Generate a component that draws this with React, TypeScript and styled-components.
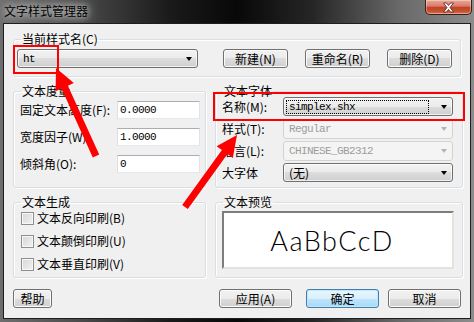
import React from "react";
import styled, { createGlobalStyle } from "styled-components";

const GlobalStyle = createGlobalStyle`
  html, body {
    margin: 0;
    padding: 0;
    background: #ffffff;
  }
  body {
    font-family: "Noto Sans CJK SC", "Liberation Sans", sans-serif;
    font-size: 12px;
    color: #000;
  }
  * {
    box-sizing: border-box;
  }
`;

const MONO = `"Liberation Mono", "Noto Sans CJK SC", monospace`;

const Window = styled.div`
  position: relative;
  width: 474px;
  height: 322px;
  display: flex;
  flex-direction: column;
  padding: 0 3px 3px 3px;
  overflow: hidden;
  background: linear-gradient(
    90deg,
    #6e6e6e 0%,
    #4c4c4c 16%,
    #1a1a1a 36%,
    #080808 50%,
    #262626 66%,
    #686868 84%,
    #8c8c8c 100%
  );
`;

const TitleBar = styled.div`
  height: 23px;
  display: flex;
  align-items: flex-start;
`;

const TitleText = styled.span`
  margin: 3px 0 0 1px;
  line-height: 16px;
  font-size: 12px;
  color: #000;
  text-shadow: 0 0 6px rgba(255, 255, 255, 0.85), 0 0 12px rgba(255, 255, 255, 0.6),
    0 0 18px rgba(255, 255, 255, 0.4);
`;

const CloseButton = styled.div`
  margin-left: auto;
  margin-right: -1px;
  width: 47px;
  height: 15px;
  display: flex;
  align-items: center;
  justify-content: center;
  border: 1px solid #3a1d18;
  border-top: none;
  border-radius: 0 0 5px 5px;
  background: linear-gradient(#e9a898 0%, #d97a66 45%, #c0412a 50%, #c5502f 80%, #d7775a 100%);
  box-shadow: inset 0 0 0 1px rgba(255, 255, 255, 0.35);
`;

const Client = styled.div`
  flex: 1;
  display: flex;
  flex-direction: column;
  background: #f0f0f0;
  border: 1px solid #1e1e1e;
  padding: 9px 9px 0 9px;
`;

const Group = styled.fieldset<{ $h?: number }>`
  margin: 0;
  min-width: 0;
  height: ${(p) => (p.$h ? `${p.$h}px` : "auto")};
  border: 1px solid #d5dfe5;
  border-radius: 3px;
  padding: 0;
  box-shadow: inset 1px 1px 0 #ffffff, 1px 1px 0 #ffffff;
`;

const Legend = styled.legend`
  margin-left: 7px;
  padding: 0 1px;
  font-size: 12px;
  line-height: 12px;
`;

const StyleRow = styled.div`
  display: flex;
  align-items: center;
  padding: 4px 8px 8px 3px;
`;

const ButtonGroup = styled.div`
  margin-left: auto;
  display: flex;
  gap: 17px;
`;

const Columns = styled.div`
  display: grid;
  width: 450px;
  grid-template-columns: 193px 248px;
  column-gap: 9px;
  margin-top: 8px;
`;

const FieldList = styled.div<{ $gap: number; $pad: string }>`
  display: flex;
  flex-direction: column;
  gap: ${(p) => p.$gap}px;
  padding: ${(p) => p.$pad};
`;

const FieldRow = styled.div<{ $h: number }>`
  display: flex;
  align-items: center;
  height: ${(p) => p.$h}px;
`;

const FieldLabel = styled.span<{ $w?: number }>`
  flex: 0 0 ${(p) => (p.$w ? `${p.$w}px` : "auto")};
  white-space: nowrap;
  line-height: 14px;
`;

const TextInput = styled.div`
  margin-left: auto;
  width: 83px;
  height: 18px;
  background: #ffffff;
  border: 1px solid;
  border-color: #abadb3 #e2e3ea #e3e9ef #dbdfe6;
  padding: 0 0 0 2px;
  font-family: ${MONO};
  font-size: 11px;
  letter-spacing: -0.6px;
  line-height: 16px;
`;

const Combo = styled.div<{ $w?: number; $disabled?: boolean }>`
  ${(p) => (p.$w ? `width: ${p.$w}px;` : "flex: 1;")}
  height: ${(p) => (p.$disabled ? 20 : 19)}px;
  display: flex;
  align-items: center;
  border: 1px solid ${(p) => (p.$disabled ? "#d3d3d3" : "#707070")};
  border-radius: 3px;
  background: ${(p) =>
    p.$disabled
      ? "#f4f4f4"
      : "linear-gradient(#f2f2f2 0%, #ebebeb 50%, #dddddd 50%, #cfcfcf 100%)"};
  box-shadow: ${(p) => (p.$disabled ? "none" : "inset 0 0 0 1px rgba(255,255,255,0.7)")};
  padding: 0 5px 0 2px;
  color: ${(p) => (p.$disabled ? "#9c9c9c" : "#000")};
`;

const ComboValue = styled.span<{ $focus?: boolean; $cjk?: boolean }>`
  flex: 1;
  height: 14px;
  margin-right: 12px;
  padding-left: 2px;
  border: 1px dotted ${(p) => (p.$focus ? "#000" : "transparent")};
  font-family: ${(p) => (p.$cjk ? `"Noto Sans CJK SC", sans-serif` : MONO)};
  font-size: ${(p) => (p.$cjk ? 12 : 11)}px;
  letter-spacing: ${(p) => (p.$cjk ? 0 : -0.6)}px;
  line-height: 12px;
  white-space: nowrap;
`;

const Caret = styled.span<{ $disabled?: boolean }>`
  width: 0;
  height: 0;
  border-left: 3.5px solid transparent;
  border-right: 3.5px solid transparent;
  border-top: 4px solid ${(p) => (p.$disabled ? "#b4b4b4" : "#000")};
`;

const Check = styled.span`
  width: 13px;
  height: 13px;
  margin-right: 3px;
  border: 1px solid #8e8f8f;
  background: linear-gradient(135deg, #d4d6d9 0%, #f2f2f2 100%);
  box-shadow: inset 0 0 0 1px #f7f7f7;
`;

const Preview = styled.div`
  height: 58px;
  display: flex;
  align-items: center;
  justify-content: center;
  padding-right: 12px;
  background: #ffffff;
  border: 2px solid;
  border-color: #7d7d7d #e2e2e2 #e2e2e2 #7d7d7d;
  font-family: Lato, Inter, "DejaVu Sans", sans-serif;
  font-weight: 300;
  font-size: 27px;
  letter-spacing: 1.5px;
  color: #000;
`;

const BottomRow = styled.div`
  display: flex;
  margin-top: 11px;
`;

const Button = styled.button<{ $w: number; $ml?: number; $default?: boolean }>`
  width: ${(p) => p.$w}px;
  height: 19px;
  margin: 0 0 0 ${(p) => p.$ml ?? 0}px;
  padding: 0;
  border: 1px solid ${(p) => (p.$default ? "#3c7fb1" : "#707070")};
  border-radius: 3px;
  background: ${(p) =>
    p.$default
      ? "linear-gradient(#eaf6fd 0%, #d9f0fc 50%, #bee6fd 50%, #a7d9f5 100%)"
      : "linear-gradient(#f2f2f2 0%, #ebebeb 50%, #dddddd 50%, #cfcfcf 100%)"};
  box-shadow: inset 0 0 0 1px ${(p) => (p.$default ? "#c6e6f8" : "#fbfbfb")};
  font-family: "Noto Sans CJK SC", "Liberation Sans", sans-serif;
  font-size: 12px;
  line-height: 16px;
  color: #000;
`;

const Overlay = styled.svg`
  position: absolute;
  left: 0;
  top: 0;
  width: 474px;
  height: 322px;
  pointer-events: none;
`;

const arrowPoints = (tx: number, ty: number, ex: number, ey: number) => {
  const headLen = 21;
  const headHalf = 10;
  const shaftHalf = 3.5;
  const dx = ex - tx;
  const dy = ey - ty;
  const len = Math.hypot(dx, dy);
  const ux = dx / len;
  const uy = dy / len;
  const px = -uy;
  const py = ux;
  const bx = tx + ux * headLen;
  const by = ty + uy * headLen;
  const pts = [
    [tx, ty],
    [bx + px * headHalf, by + py * headHalf],
    [bx + px * shaftHalf, by + py * shaftHalf],
    [ex + px * shaftHalf, ey + py * shaftHalf],
    [ex - px * shaftHalf, ey - py * shaftHalf],
    [bx - px * shaftHalf, by - py * shaftHalf],
    [bx - px * headHalf, by - py * headHalf],
  ];
  return pts.map((p) => `${p[0].toFixed(1)},${p[1].toFixed(1)}`).join(" ");
};

const metrics = [
  { label: "固定文本高度(F):", value: "0.0000" },
  { label: "宽度因子(W):", value: "1.0000" },
  { label: "倾斜角(O):", value: "0" },
];

const fonts = [
  { label: "名称(M):", value: "simplex.shx", focus: true },
  { label: "样式(T):", value: "Regular", disabled: true },
  { label: "语言(L):", value: "CHINESE_GB2312", disabled: true },
  { label: "大字体", value: "(无)", cjk: true },
];

const effects = ["文本反向印刷(B)", "文本颠倒印刷(U)", "文本垂直印刷(V)"];

export default function App() {
  return (
    <>
      <GlobalStyle />
      <Window>
        <TitleBar>
          <TitleText>文字样式管理器</TitleText>
          <CloseButton>
            <svg width="13" height="11" viewBox="0 0 13 11">
              <path
                d="M1.5 1 L4.5 1 L6.5 3.5 L8.5 1 L11.5 1 L8 5.5 L11.5 10 L8.5 10 L6.5 7.5 L4.5 10 L1.5 10 L5 5.5 Z"
                fill="#ffffff"
                stroke="#4a2018"
                strokeWidth="0.8"
              />
            </svg>
          </CloseButton>
        </TitleBar>
        <Client>
          <Group>
            <Legend>当前样式名(C)</Legend>
            <StyleRow>
              <Combo $w={181}>
                <ComboValue>ht</ComboValue>
                <Caret />
              </Combo>
              <ButtonGroup>
                <Button $w={65}>新建(N)</Button>
                <Button $w={65}>重命名(R)</Button>
                <Button $w={65}>删除(D)</Button>
              </ButtonGroup>
            </StyleRow>
          </Group>

          <Columns>
            <Group $h={103}>
              <Legend>文本度量</Legend>
              <FieldList $gap={9} $pad="4px 5px 0 6px">
                {metrics.map((m) => (
                  <FieldRow key={m.label} $h={18}>
                    <FieldLabel>{m.label}</FieldLabel>
                    <TextInput>{m.value}</TextInput>
                  </FieldRow>
                ))}
              </FieldList>
            </Group>
            <Group $h={103}>
              <Legend>文本字体</Legend>
              <FieldList $gap={3} $pad="0 9px 0 6px">
                {fonts.map((f) => (
                  <FieldRow key={f.label} $h={19}>
                    <FieldLabel $w={61}>{f.label}</FieldLabel>
                    <Combo $disabled={f.disabled}>
                      <ComboValue $focus={f.focus} $cjk={f.cjk}>
                        {f.value}
                      </ComboValue>
                      <Caret $disabled={f.disabled} />
                    </Combo>
                  </FieldRow>
                ))}
              </FieldList>
            </Group>
          </Columns>

          <Columns>
            <Group $h={82}>
              <Legend>文本生成</Legend>
              <FieldList $gap={7} $pad="2px 6px 0 7px">
                {effects.map((e) => (
                  <FieldRow key={e} $h={16}>
                    <Check />
                    <FieldLabel>{e}</FieldLabel>
                  </FieldRow>
                ))}
              </FieldList>
            </Group>
            <Group $h={82}>
              <Legend>文本预览</Legend>
              <FieldList $gap={0} $pad="3px 8px 0 6px">
                <Preview>AaBbCcD</Preview>
              </FieldList>
            </Group>
          </Columns>

          <BottomRow>
            <Button $w={39}>帮助</Button>
            <Button $w={73} $ml={167}>
              应用(A)
            </Button>
            <Button $w={73} $ml={14} $default>
              确定
            </Button>
            <Button $w={73} $ml={9}>
              取消
            </Button>
          </BottomRow>
        </Client>

        <Overlay viewBox="0 0 474 322">
          <rect x="14" y="46" width="44" height="27" fill="none" stroke="#ff0000" strokeWidth="2" />
          <rect x="214" y="93" width="250" height="27" fill="none" stroke="#ff0000" strokeWidth="2" />
          <polygon points={arrowPoints(56, 68, 96, 156)} fill="#ff0000" />
          <polygon points={arrowPoints(237, 135, 185, 207)} fill="#ff0000" />
        </Overlay>
      </Window>
    </>
  );
}
